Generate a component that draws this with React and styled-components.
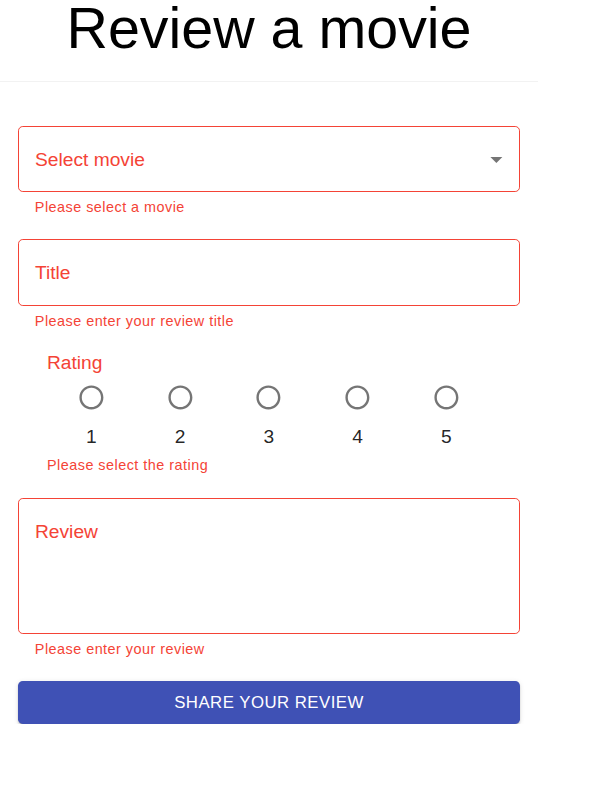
import React from "react";
import styled, { createGlobalStyle } from "styled-components";

const Global = createGlobalStyle`
  html, body { margin: 0; padding: 0; background: #fff; }
  body { font-family: "Liberation Sans", Arial, sans-serif; }
`;

const RED = "#f44336";

const Page = styled.div`
  width: 538px;
`;

const Heading = styled.h1`
  margin: 0;
  font-size: 57.4px;
  line-height: 57px;
  font-weight: 400;
  text-align: center;
  color: #000;
`;

const Divider = styled.div`
  margin-top: 24px;
  height: 1px;
  background: #f2f2f2;
`;

const Form = styled.form`
  display: flex;
  flex-direction: column;
  padding: 0 18px;
`;

const Field = styled.div`
  margin-top: ${(p) => p.$mt}px;
  height: ${(p) => p.$h}px;
  box-sizing: border-box;
  border: 1px solid ${RED};
  border-radius: 4.8px;
  display: flex;
  align-items: ${(p) => (p.$multiline ? "flex-start" : "center")};
  padding: ${(p) => (p.$multiline ? "22.8px 8.4px 0 16px" : "0 8.4px 0 16px")};
`;

const FieldLabel = styled.span`
  font-size: 19.2px;
  line-height: 19.2px;
  color: ${RED};
`;

const Arrow = styled.svg`
  margin-left: auto;
  width: 28.8px;
  height: 28.8px;
  fill: rgba(0, 0, 0, 0.54);
`;

const Helper = styled.div`
  margin-top: ${(p) => p.$mt ?? 4}px;
  padding-left: ${(p) => p.$pl ?? 16.8}px;
  font-size: 14.4px;
  line-height: 23.9px;
  letter-spacing: 0.48px;
  color: ${RED};
`;

const RatingGroup = styled.div`
  margin-top: 18.8px;
  padding-left: 29px;
  display: flex;
  flex-direction: column;
`;

const RatingLabel = styled.div`
  font-size: 19.2px;
  line-height: 19.2px;
  color: ${RED};
`;

const RadioRow = styled.div`
  margin-top: 11.2px;
  display: grid;
  grid-template-columns: repeat(5, 88.75px);
`;

const RadioItem = styled.label`
  display: flex;
  flex-direction: column;
  align-items: center;
`;

const RadioIcon = styled.svg`
  width: 28.8px;
  height: 28.8px;
  fill: rgba(0, 0, 0, 0.54);
`;

const RadioText = styled.span`
  margin-top: 10.5px;
  font-size: 19.2px;
  line-height: 28.8px;
  color: rgba(0, 0, 0, 0.87);
`;

const Button = styled.button`
  margin-top: 20px;
  height: 42.5px;
  border: none;
  border-radius: 4.8px;
  background: #3f51b5;
  color: #fff;
  font-family: "Liberation Sans", Arial, sans-serif;
  font-size: 16.8px;
  letter-spacing: 0.48px;
  text-transform: uppercase;
  padding-top: 1px;
  box-shadow: 0 3px 1px -2px rgba(0, 0, 0, 0.2), 0 2px 2px 0 rgba(0, 0, 0, 0.14),
    0 1px 5px 0 rgba(0, 0, 0, 0.12);
  cursor: pointer;
`;

const ratings = [1, 2, 3, 4, 5];

export default function App() {
  return (
    <Page>
      <Global />
      <Heading>Review a movie</Heading>
      <Divider />
      <Form onSubmit={(e) => e.preventDefault()}>
        <Field $mt={44} $h={66.4}>
          <FieldLabel>Select movie</FieldLabel>
          <Arrow viewBox="0 0 24 24">
            <path d="M7 10l5 5 5-5z" />
          </Arrow>
        </Field>
        <Helper>Please select a movie</Helper>

        <Field $mt={18.9} $h={67.2}>
          <FieldLabel>Title</FieldLabel>
        </Field>
        <Helper>Please enter your review title</Helper>

        <RatingGroup>
          <RatingLabel>Rating</RatingLabel>
          <RadioRow>
            {ratings.map((r) => (
              <RadioItem key={r}>
                <RadioIcon viewBox="0 0 24 24">
                  <path d="M12 2C6.48 2 2 6.48 2 12s4.48 10 10 10 10-4.48 10-10S17.52 2 12 2zm0 18c-4.42 0-8-3.58-8-8s3.58-8 8-8 8 3.58 8 8-3.58 8-8 8z" />
                </RadioIcon>
                <RadioText>{r}</RadioText>
              </RadioItem>
            ))}
          </RadioRow>
          <Helper $mt={2.6} $pl={0}>Please select the rating</Helper>
        </RatingGroup>

        <Field $mt={20.1} $h={135.4} $multiline>
          <FieldLabel>Review</FieldLabel>
        </Field>
        <Helper>Please enter your review</Helper>

        <Button type="submit">Share your review</Button>
      </Form>
    </Page>
  );
}
